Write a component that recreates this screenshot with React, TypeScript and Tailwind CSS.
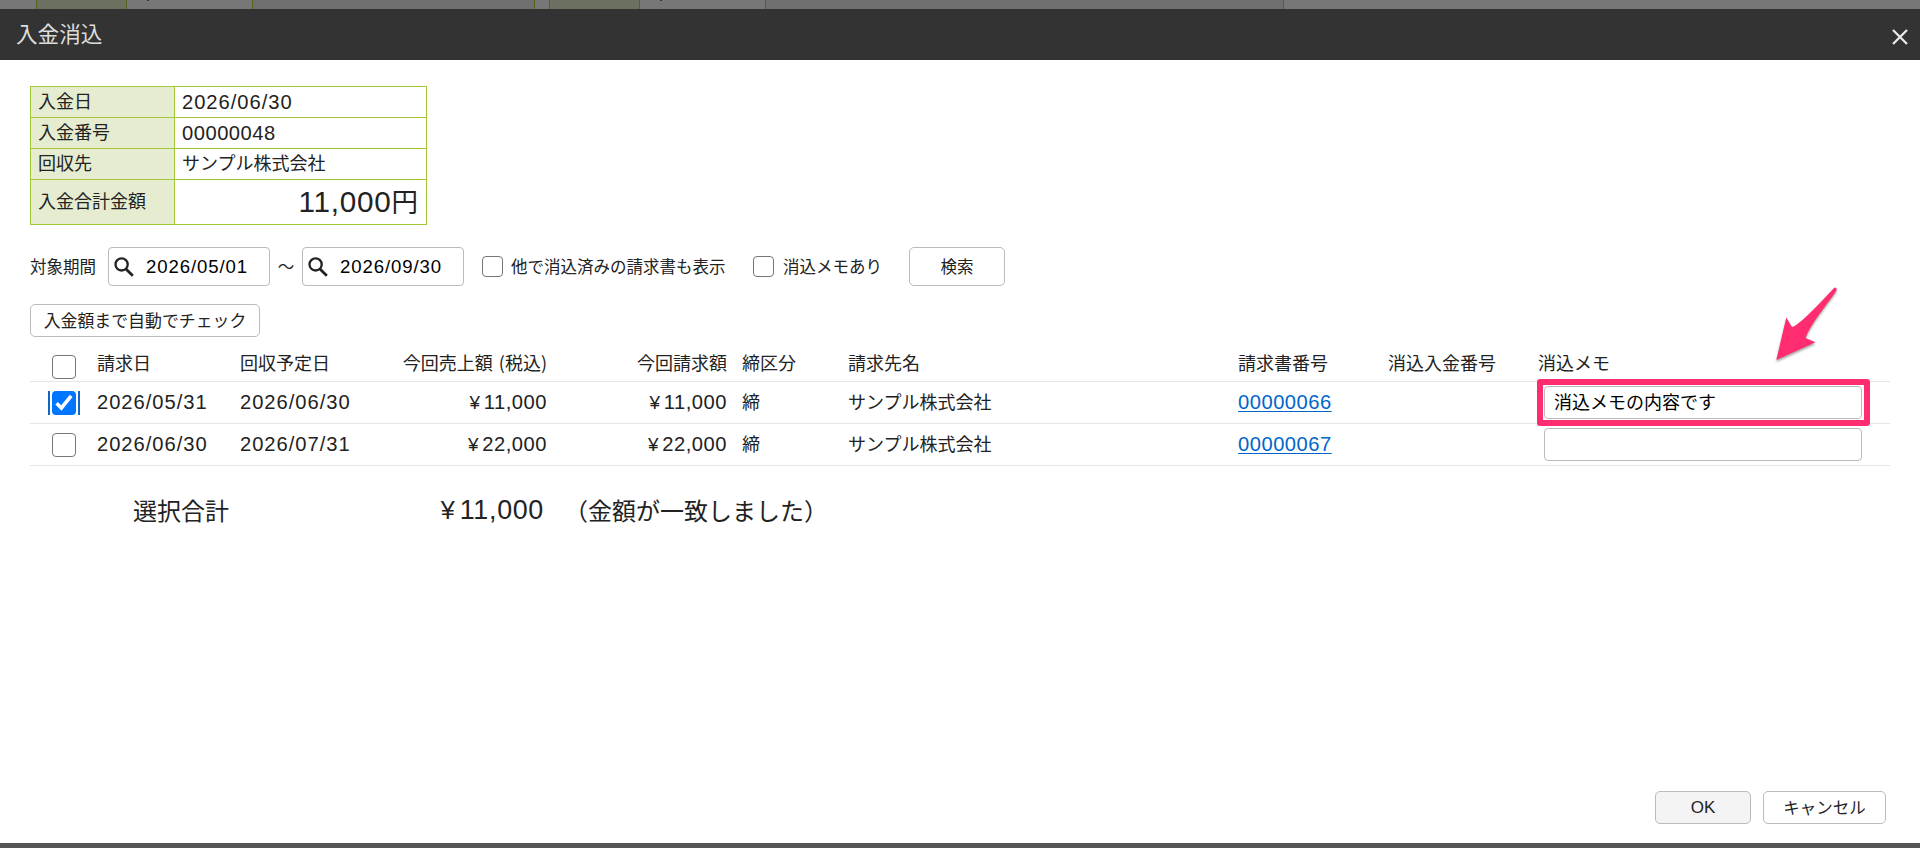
import type { ReactNode } from 'react';
import { clsx } from 'clsx';

type Invoice = {
  checked: boolean;
  date: string;
  due: string;
  sales: string;
  billed: string;
  number: string;
  memo: string;
};

const invoices: Invoice[] = [
  {
    checked: true,
    date: '2026/05/31',
    due: '2026/06/30',
    sales: '11,000',
    billed: '11,000',
    number: '00000066',
    memo: '消込メモの内容です',
  },
  {
    checked: false,
    date: '2026/06/30',
    due: '2026/07/31',
    sales: '22,000',
    billed: '22,000',
    number: '00000067',
    memo: '',
  },
];

const columns =
  'grid grid-cols-[67px_143px_162px_145px_180px_121px_390px_150px_150px_1fr] border-b border-[#e6e6e6]';

// Latin digits are set a little wider than the Japanese text around them
const Num = ({ children, date }: { children: ReactNode; date?: boolean }) => (
  <span
    className={clsx(
      "font-['Liberation_Sans',sans-serif] text-[1.12em] leading-none",
      date ? 'tracking-[0.048em]' : 'tracking-[0.025em]',
    )}
  >
    {children}
  </span>
);

const Yen = ({ children }: { children: ReactNode }) => (
  <span>
    <span className="mr-[0.2em] font-['Liberation_Sans',sans-serif] text-[1.05em]">¥</span>
    <Num>{children}</Num>
  </span>
);

const Checkbox = ({ checked, className }: { checked?: boolean; className?: string }) => (
  <span
    className={clsx(
      'flex shrink-0 items-center justify-center rounded-[4px]',
      checked ? 'bg-[#0075ff]' : 'border border-[#767676] bg-white',
      className,
    )}
  >
    {checked && (
      <svg viewBox="0 0 24 24" className="size-6" fill="none" stroke="white" strokeWidth="3.6">
        <path d="M4.6 12.2 9.4 17 19.2 4.8" />
      </svg>
    )}
  </span>
);

const Button = ({ children, className }: { children: ReactNode; className?: string }) => (
  <button className={clsx('flex items-center justify-center rounded-[5px] border border-[#bbb]', className)}>
    {children}
  </button>
);

const DateInput = ({ value }: { value: string }) => (
  <div className="flex h-[39px] w-[162px] items-center rounded-[4px] border border-[#bbb] pl-[5px] text-black">
    <svg viewBox="0 0 20 20" className="size-5 text-[#222]" fill="none" stroke="currentColor" strokeWidth="2.3">
      <circle cx="7.6" cy="7.4" r="6.1" />
      <path d="M12 12 18.8 18.8" strokeWidth="2.8" />
    </svg>
    <span className="mt-px ml-3 text-[16.6px]">
      <Num date>{value}</Num>
    </span>
  </div>
);

const SummaryRow = ({ label, children, className }: { label: string; children: ReactNode; className: string }) => (
  <div className={clsx('flex border-b border-[#a4c639]', className)}>
    <div className="flex w-[144px] items-center border-r border-[#a4c639] bg-[#e5ecd0] pb-1 pl-[7px]">{label}</div>
    <div className="flex flex-1 items-center pr-2 pl-[7px]">{children}</div>
  </div>
);

const App = () => {
  return (
    <div className="flex h-[848px] w-[1920px] flex-col overflow-hidden bg-[#555] font-['Noto_Sans_CJK_JP',sans-serif] text-[18px] leading-none text-[#222]">
      <div className="flex h-[9px] bg-[#777]">
        <div className="ml-9 w-[91px] border-x border-[#55641a] bg-[#6b7060]" />
        <div className="w-[125px] pl-5">
          <div className="h-px w-[2px] bg-[#333]" />
        </div>
        <div className="w-[283px] border-x border-[#55641a] bg-[#707070]" />
        <div className="ml-[14px] w-[91px] border-x border-[#55641a] bg-[#6b7060]" />
        <div className="w-[125px] pl-5">
          <div className="h-px w-[2px] bg-[#333]" />
        </div>
        <div className="w-[519px] border-x border-[#55641a] bg-[#707070]" />
      </div>

      <header className="flex h-[51px] items-center justify-between bg-[#333] pr-3 pl-4 text-[#ddd]">
        <h1 className="pb-1 text-[21.6px]">入金消込</h1>
        <svg viewBox="0 0 16 16" className="mt-1 size-4" fill="none" stroke="#e8e8e8" strokeWidth="2.3">
          <path d="M1 1 15 15M15 1 1 15" />
        </svg>
      </header>

      <main className="flex h-[783px] flex-col bg-white px-[30px] pt-[26px]">
        <div className="w-[397px] border-x border-t border-[#a4c639]">
          <SummaryRow label="入金日" className="h-[31px]">
            <Num date>2026/06/30</Num>
          </SummaryRow>
          <SummaryRow label="入金番号" className="h-[31px]">
            <Num>00000048</Num>
          </SummaryRow>
          <SummaryRow label="回収先" className="h-[31px]">
            <span className="pb-1">サンプル株式会社</span>
          </SummaryRow>
          <SummaryRow label="入金合計金額" className="h-[45px]">
            <span className="ml-auto text-[26.5px]">
              <Num>11,000</Num>円
            </span>
          </SummaryRow>
        </div>

        <div className="mt-[22px] flex h-[39px] items-center text-[16.5px]">
          <span className="w-[78px]">対象期間</span>
          <DateInput value="2026/05/01" />
          <span className="w-8 text-center">～</span>
          <DateInput value="2026/09/30" />
          <Checkbox className="mr-2 ml-[18px] size-[21px]" />
          <span className="w-[242px]">他で消込済みの請求書も表示</span>
          <Checkbox className="mr-[9px] size-[21px]" />
          <span className="w-[126px]">消込メモあり</span>
          <Button className="h-[39px] w-24">検索</Button>
        </div>

        <Button className="mt-[18px] h-[33px] w-[230px] shrink-0 pb-px text-[16.9px]">入金額まで自動でチェック</Button>

        <div className="mt-[10px] w-[1860px]">
          <div className={clsx(columns, 'h-[35px] leading-[31px]')}>
            <Checkbox className="mt-2 ml-[22px] size-6" />
            <span>請求日</span>
            <span>回収予定日</span>
            <span className="text-right [word-spacing:2px]">今回売上額 (税込)</span>
            <span className="text-right">今回請求額</span>
            <span className="pl-[15px]">締区分</span>
            <span>請求先名</span>
            <span>請求書番号</span>
            <span>消込入金番号</span>
            <span>消込メモ</span>
          </div>
          {invoices.map((row) => (
            <div key={row.number} className={clsx(columns, 'h-[42px] items-center')}>
              <span className={clsx('ml-[18px] w-8', row.checked ? 'border-x-2 border-[#1266c8] px-[2px]' : 'pl-1')}>
                <Checkbox checked={row.checked} className="size-6" />
              </span>
              <span>
                <Num date>{row.date}</Num>
              </span>
              <span>
                <Num date>{row.due}</Num>
              </span>
              <span className="text-right">
                <Yen>{row.sales}</Yen>
              </span>
              <span className="text-right">
                <Yen>{row.billed}</Yen>
              </span>
              <span className="pb-[3px] pl-[15px]">締</span>
              <span className="pb-[3px]">サンプル株式会社</span>
              <a className="text-[#0066cc] underline underline-offset-2" href="#">
                <Num>{row.number}</Num>
              </a>
              <span />
              <div className="relative ml-[6px] flex h-[33px] w-[318px] items-center rounded-[4px] border border-[#bbb] pb-[3px] pl-[9px] text-black">
                {row.memo}
                {row.memo && (
                  <>
                    <span className="absolute -top-2 -left-2 h-[47px] w-[333px] rounded-[3px] border-6 border-[#ff2d6f]" />
                    <svg
                      viewBox="0 0 70 84"
                      className="absolute -top-[103px] left-[227px] h-[84px] w-[70px] drop-shadow-[0_2px_1px_rgba(0,0,0,0.35)]"
                      fill="#ff2d6f"
                    >
                      <path d="M4.3 76 14.3 33.5 20 43Q27 42 61.5 4.5Q65 2 64.5 6.5C54 22 39 39 33.5 54L43.5 58.3Z" />
                    </svg>
                  </>
                )}
              </div>
            </div>
          ))}
        </div>

        <div className="mt-[32px] flex h-6 items-center text-[24px]">
          <span className="w-[306px] pl-[103px]">選択合計</span>
          <span className="w-[208px] text-right">
            <Yen>11,000</Yen>
          </span>
          <span className="ml-5">（金額が一致しました）</span>
        </div>

        <div className="mt-auto mb-[19px] flex justify-end gap-3 pr-1 text-[16.5px]">
          <Button className="h-[33px] w-24 bg-[#f4f4f4]">
            <span className="font-['Liberation_Sans',sans-serif] text-[17px]">OK</span>
          </Button>
          <Button className="h-[33px] w-[123px]">キャンセル</Button>
        </div>
      </main>
    </div>
  );
};

export default App;
